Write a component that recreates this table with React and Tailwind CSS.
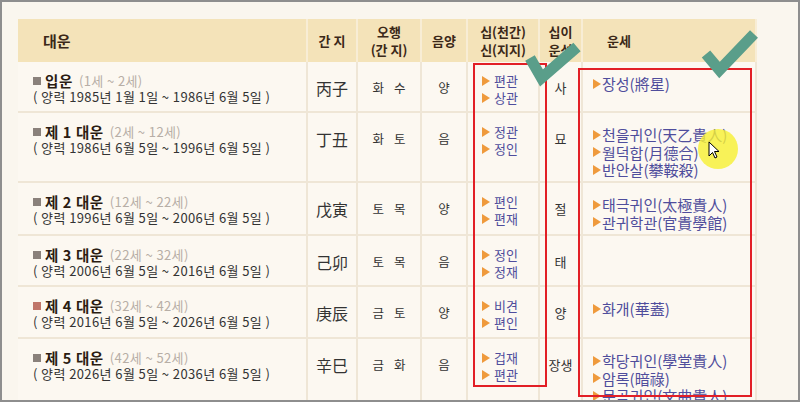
import React from 'react'

const font = { fontFamily: '"Noto Sans CJK KR", "Noto Sans", sans-serif' }

const rows = [
  { h: 'h-[51px]', mark: 'bg-[#8a817b]', title: '입운', age: '(1세 ~ 2세)', date: '( 양력 1985년 1월 1일 ~ 1986년 6월 5일 )', gz: '丙子', oh: ['화', '수'], yy: '양', ss: ['편관', '상관'], un: '사', fx: ['장성(將星)'] },
  { h: 'h-[70px]', mark: 'bg-[#8a817b]', title: '제 1 대운', age: '(2세 ~ 12세)', date: '( 양력 1986년 6월 5일 ~ 1996년 6월 5일 )', gz: '丁丑', oh: ['화', '토'], yy: '음', ss: ['정관', '정인'], un: '묘', fx: ['천을귀인(天乙貴人)', '월덕합(月德合)', '반안살(攀鞍殺)'] },
  { h: 'h-[53px]', mark: 'bg-[#8a817b]', title: '제 2 대운', age: '(12세 ~ 22세)', date: '( 양력 1996년 6월 5일 ~ 2006년 6월 5일 )', gz: '戊寅', oh: ['토', '목'], yy: '양', ss: ['편인', '편재'], un: '절', fx: ['태극귀인(太極貴人)', '관귀학관(官貴學館)'] },
  { h: 'h-[51px]', mark: 'bg-[#8a817b]', title: '제 3 대운', age: '(22세 ~ 32세)', date: '( 양력 2006년 6월 5일 ~ 2016년 6월 5일 )', gz: '己卯', oh: ['토', '목'], yy: '음', ss: ['정인', '정재'], un: '태', fx: [] },
  { h: 'h-[52px]', mark: 'bg-[#c0766a]', title: '제 4 대운', age: '(32세 ~ 42세)', date: '( 양력 2016년 6월 5일 ~ 2026년 6월 5일 )', gz: '庚辰', oh: ['금', '토'], yy: '양', ss: ['비견', '편인'], un: '양', fx: ['화개(華蓋)'] },
  { h: 'h-[90px]', mark: 'bg-[#8a817b]', title: '제 5 대운', age: '(42세 ~ 52세)', date: '( 양력 2026년 6월 5일 ~ 2036년 6월 5일 )', gz: '辛巳', oh: ['금', '화'], yy: '음', ss: ['겁재', '편관'], un: '장생', fx: ['학당귀인(學堂貴人)', '암록(暗祿)', '문곡귀인(文曲貴人)'] },
]

const cols = 'grid grid-cols-[290px_50px_64px_46px_72px_43px_174px]'

function Tri() {
  return (
    <svg width="8" height="10" viewBox="0 0 8 10" className="shrink-0">
      <path d="M0 0 L8 5 L0 10 Z" fill="#ef9a3c" />
    </svg>
  )
}

function Cell({ children, className = '' }) {
  return (
    <div className={`flex h-[52px] items-center justify-center ${className}`}>
      {children}
    </div>
  )
}

function Row({ r }) {
  return (
    <div className={`${cols} ${r.h} items-start border-b-2 border-[#efe6d6] bg-[#fcf8f1]`}>
      <div className="flex h-full flex-col justify-start border-r-2 border-[#efe6d6] pl-[15px] pt-[10px] text-[13px] leading-[16px] tracking-[0.4px] text-[#333]">
        <div className="flex h-[17px] items-center">
          <span className={`mr-[4px] inline-block h-[8px] w-[8px] ${r.mark}`} />
          <span className="text-[14.5px] font-bold leading-[17px] tracking-[0.6px] text-[#2b1c12]">{r.title}</span>
          <span className="ml-[6px] text-[13px] leading-[17px] text-[#b7aea6]">{r.age}</span>
        </div>
        <div>{r.date}</div>
      </div>
      <div className="h-full border-r-2 border-[#efe6d6]">
        <Cell className="text-[16px] text-[#333]">{r.gz}</Cell>
      </div>
      <div className="h-full border-r-2 border-[#efe6d6]">
        <Cell className="gap-[10px] text-[12.5px] text-[#333]">
          <span>{r.oh[0]}</span>
          <span>{r.oh[1]}</span>
        </Cell>
      </div>
      <div className="h-full border-r-2 border-[#efe6d6]">
        <Cell className="text-[12.5px] text-[#333]">{r.yy}</Cell>
      </div>
      <div className="h-full border-r-2 border-[#efe6d6]">
        <div className="flex h-[52px] flex-col justify-center pl-[14px] pt-[3px] text-[13px] leading-[16.5px] text-[#4f4d9c]">
          {r.ss.map(s => (
            <div key={s} className="flex items-center gap-[4px]">
              <Tri />
              <span>{s}</span>
            </div>
          ))}
        </div>
      </div>
      <div className="h-full border-r-2 border-[#efe6d6]">
        <Cell className="text-[13px] text-[#333]">{r.un}</Cell>
      </div>
      <div className="flex h-full flex-col border-r-2 border-[#efe6d6] pl-[10px] pt-[13px] text-[15px] leading-[17.5px] text-[#4f4d9c]">
        {r.fx.map(f => (
          <div key={f} className="flex items-center gap-[1px]">
            <Tri />
            <span>{f}</span>
          </div>
        ))}
      </div>
    </div>
  )
}

export default function App() {
  return (
    <div className="relative h-[402px] w-[800px] overflow-hidden border-2 border-[#8e8e8e] bg-[#faf6ee]" style={font}>
      <div className="ml-[16px] mt-[17px] w-[739px]">
        <div className={`${cols} h-[43px] bg-[#f4e3b9] text-[13px] font-bold leading-[18px] text-[#3b2818]`}>
          <div className="flex items-center border-r-2 border-[#f8edd5] pl-[25px] text-[15px]">대운</div>
          <div className="flex items-center justify-center border-r-2 border-[#f8edd5]">간&nbsp;지</div>
          <div className="flex flex-col items-center justify-center border-r-2 border-[#f8edd5]">
            <span>오행</span>
            <span>(간&nbsp;지)</span>
          </div>
          <div className="flex items-center justify-center border-r-2 border-[#f8edd5]">음양</div>
          <div className="flex flex-col items-center justify-center border-r-2 border-[#f8edd5]">
            <span>십(천간)</span>
            <span>신(지지)</span>
          </div>
          <div className="flex flex-col items-center justify-center border-r-2 border-[#f8edd5]">
            <span>십이</span>
            <span>운성</span>
          </div>
          <div className="flex items-center border-r-2 border-[#f8edd5] pl-[24px]">운세</div>
        </div>
        {rows.map(r => <Row key={r.title} r={r} />)}
      </div>

      {/* red boxes */}
      <div className="absolute left-[471px] top-[61px] h-[324px] w-[74px] border-2 border-[#e21f26]" />
      <div className="absolute left-[576px] top-[66px] h-[329px] w-[174px] border-2 border-[#e21f26]" />

      {/* cursor highlight */}
      <div className="absolute left-[696px] top-[127px] h-[40px] w-[40px] rounded-full bg-[#f6f032] opacity-80" />
      <svg className="absolute left-[706px] top-[139px]" width="12" height="18" viewBox="0 0 12 18">
        <path d="M1 1 L1 15 L4.5 11.5 L7 17 L9 16 L6.5 10.5 L11 10.5 Z" fill="#fff" stroke="#000" strokeWidth="1" strokeLinejoin="round" />
      </svg>

      {/* check marks */}
      <svg className="pointer-events-none absolute -left-[2px] -top-[2px]" width="800" height="402">
        <polyline points="530,58 541.5,78 577,47" fill="none" stroke="#5a9e8a" strokeWidth="11" />
        <polyline points="706,54 719.5,70 754,34" fill="none" stroke="#5a9e8a" strokeWidth="11" />
      </svg>
    </div>
  )
}
